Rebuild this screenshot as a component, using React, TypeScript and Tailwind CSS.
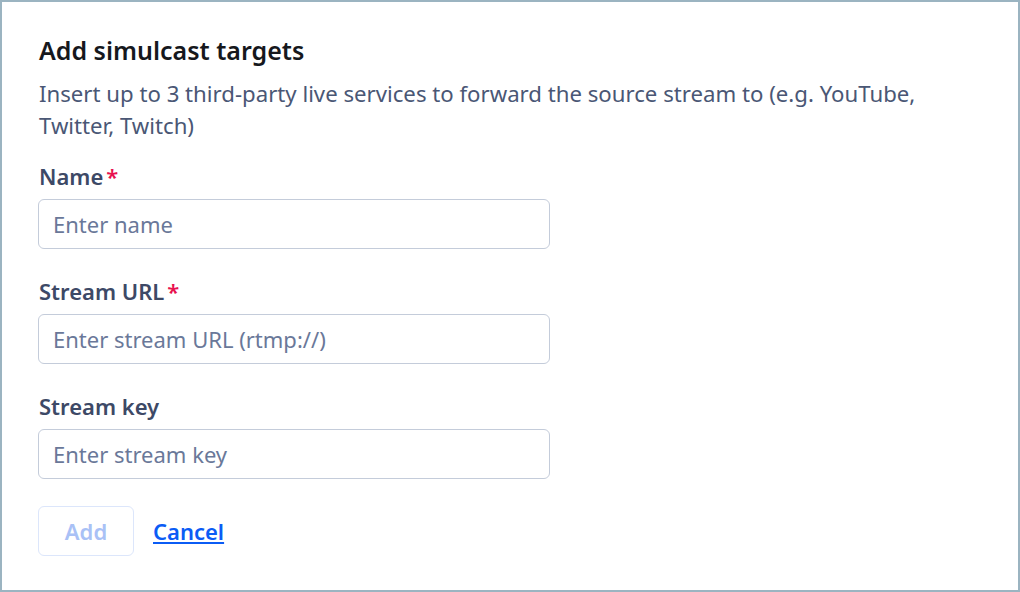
export default function App() {
  const font = { fontFamily: '"Noto Sans", "Open Sans", sans-serif' };
  return (
    <div
      style={font}
      className="h-[592px] w-[1020px] border-2 border-[#9bb4c1] bg-white px-[36px] pt-[32px]"
    >
      <h2 className="pl-px text-[25px] font-semibold leading-[32px] text-[#16181d]">
        Add simulcast targets
      </h2>
      <p className="mt-[12px] pl-px text-[22.2px] leading-[32px] text-[#4a5775]">
        Insert up to 3 third-party live services to forward the source stream to (e.g. YouTube,
        Twitter, Twitch)
      </p>

      <Field label="Name" required placeholder="Enter name" gap="mt-[19px]" />
      <Field label="Stream URL" required placeholder="Enter stream URL (rtmp://)" gap="mt-[27px]" />
      <Field label="Stream key" placeholder="Enter stream key" gap="mt-[27px]" />

      <div className="mt-[27px] flex items-center gap-[19px]">
        <button
          disabled
          className="h-[50px] w-[96px] rounded-[6px] border border-[#dce6fb] bg-white text-[22px] font-semibold text-[#a9c1f6]"
        >
          Add
        </button>
        <a href="#" className="text-[22px] font-semibold text-[#0b5cf5] underline">
          Cancel
        </a>
      </div>
    </div>
  );
}

function Field({
  label,
  placeholder,
  required,
  gap,
}: {
  label: string;
  placeholder: string;
  required?: boolean;
  gap: string;
}) {
  return (
    <div className={gap}>
      <label className="block pl-px text-[22px] font-semibold leading-[30px] text-[#3d4966]">
        {label}
        {required && <span className="ml-[3px] text-[#e8114f]">*</span>}
      </label>
      <input
        placeholder={placeholder}
        className="mt-[8px] block h-[50px] w-[512px] rounded-[6px] border border-[#c4ccda] bg-white px-[14px] text-[22px] text-[#16181d] outline-none placeholder:text-[#6a7899]"
      />
    </div>
  );
}
